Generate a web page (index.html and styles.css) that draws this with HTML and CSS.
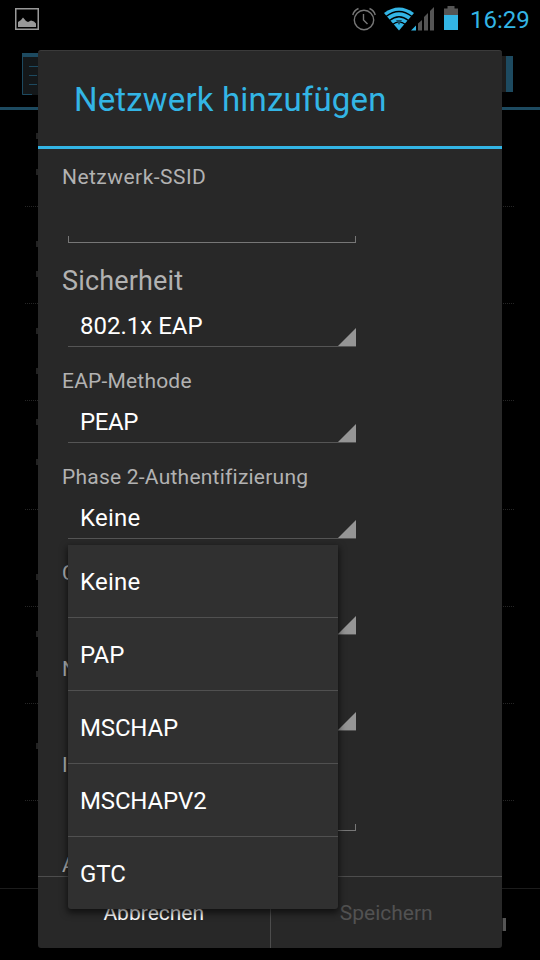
FILE: index.html
```html
<!DOCTYPE html>
<html lang="de">
<head>
<meta charset="utf-8">
<title>Netzwerk hinzufügen</title>
<link rel="stylesheet" href="styles.css">
</head>
<body>
<div class="screen">
  <header class="status">
    <svg class="picture" width="24" height="22" viewBox="0 0 24 22"><path d="M.75.75h22.5v20.5H.75z" fill="none" stroke="#999" stroke-width="1.5"/><path d="M3 19v-5l3-2 2-2.500 3 3.500 2 1 3-1.500 3 1 2 2V19z" fill="#999"/></svg>
    <div class="status-right">
      <svg class="alarm" width="24" height="24" viewBox="0 0 24 24" fill="none" stroke="#777" stroke-width="1.4"><circle cx="12" cy="13" r="9.7"/><path d="M11.500 7v6l4 4M.8 8C1.500 5 3.500 2.800 6.500 1.500M23.200 8C22.500 5 20.500 2.800 17.500 1.500"/></svg>
      <svg class="signals" width="51" height="24" viewBox="0 0 51 24"><path d="M15 23.500 0 6Q15-5 30 6z" fill="#33b5e5"/><path d="M2 9.500Q15-.5 28 9.500M5.500 13.500Q15 6 24.500 13.500M8.500 17.500Q15 12.500 21.500 17.500" fill="none" stroke="#000" stroke-width="1.300"/><path d="m12 13h6l-3 5z" fill="#174e64"/><path d="M27 23.500h5v-5z" fill="#33b5e5"/><path d="M34 23.500v-7l4-3.500v10.500zM40 23.500V10l4-4v17.500zM46 23.500V4l4-4v23.500z" fill="#555"/></svg>
      <svg class="battery" width="14" height="24" viewBox="0 0 14 24"><path d="M0 9V2.500h3.500V0h7v2.500H14V9z" fill="#555"/><path d="M0 9h14v15H0z" fill="#33b5e5"/></svg>
      <span class="clock">16:29</span>
    </div>
  </header>
  <div class="actionbar">
    <svg width="18" height="42" viewBox="0 0 18 42"><path d="M0 0h18v42H0z" fill="#14181a"/><path d="M.5 0v41.500H10M7 13.500h11M7 22.500h8M7 31.500h8" fill="none" stroke="#1d4a60"/><path d="M0 0h18v4H0z" fill="#1d4a60"/></svg>
    <span class="switch"></span>
  </div>
  <div class="settings">
    <div class="row r1"><i></i><i></i></div>
    <div class="row r2"><i></i><i></i></div>
    <div class="row r3"><i></i><i></i></div>
    <div class="row r4"><i></i><i></i></div>
    <div class="row r5"><i></i></div>
    <div class="row r3"><i></i><i></i></div>
    <div class="row r7"><i></i></div>
  </div>
  <div class="bottombar"><span class="sliver"></span></div>
</div>

<main class="dialog">
  <h1 class="title">Netzwerk hinzufügen</h1>
  <div class="form">
    <div class="field"><label class="label ssid">Netzwerk-SSID</label><div class="input"></div></div>
    <div class="field"><label class="label large">Sicherheit</label><div class="spinner"><span>802.1x EAP</span></div></div>
    <div class="field"><label class="label eap">EAP-Methode</label><div class="spinner"><span class="peap">PEAP</span></div></div>
    <div class="field"><label class="label phase">Phase 2-Authentifizierung</label><div class="spinner"><span class="keine">Keine</span></div></div>
    <div class="field"><label class="label clipped">C</label><div class="spinner"></div></div>
    <div class="field"><label class="label clipped">N</label><div class="spinner"></div></div>
    <div class="field"><label class="label clipped">I</label><div class="input"></div></div>
    <div class="field"><label class="label clipped">A</label></div>
  </div>
  <div class="buttons"><div class="button">Abbrechen</div><div class="button disabled">Speichern</div></div>
</main>

<ul class="popup">
  <li class="keine">Keine</li>
  <li>PAP</li>
  <li class="long">MSCHAP</li>
  <li class="long">MSCHAPV2</li>
  <li>GTC</li>
</ul>
</body>
</html>
```

FILE: styles.css
```css
* { box-sizing: border-box; margin: 0; padding: 0; }
body { width: 540px; height: 960px; overflow: hidden; background: #000; font-family: Roboto, sans-serif; }
svg { display: block; }
.screen { height: 960px; display: flex; flex-direction: column; }
.status { height: 38px; padding: 0 11px 0 15px; display: flex; justify-content: space-between; align-items: flex-start; flex: none; }
.picture { margin-top: 8px; }
.status-right { display: flex; align-items: flex-start; }
.alarm { margin: 7px 8px 0 0; }
.signals { margin: 7px 9px 0 0; }
.battery { margin: 6px 12px 0 0; }
.clock { font-size: 24px; line-height: 28px; color: #33b5e5; margin-top: 6px; width: 59px; white-space: nowrap; }
.actionbar { height: 72px; flex: none; padding: 15px 27px 0 22px; display: flex; justify-content: space-between; border-bottom: 3px solid #1d4a60; }
.switch { width: 20px; height: 36px; margin-top: 3px; background: linear-gradient(90deg, #1d1d1d 13px, #1d4a60 13px); }

/* Dimmed list behind the dialog: only its outer edges stay visible. */
.settings { height: 778px; flex: none; padding: 0 25px; }
.row { height: 97px; padding-left: 11px; background: repeating-linear-gradient(90deg, #262626 0 1px, #000 1px 2px) bottom / 100% 1px no-repeat; }
.row i { display: block; width: 2px; height: 6px; background: #222; }
.r1 { padding-top: 23px; }
.r1 i + i { margin-top: 30px; }
.r2 { padding-top: 34px; }
.r2 i + i { margin-top: 24px; }
.r3 { padding-top: 24px; }
.r3 i + i { margin-top: 34px; }
.r4 { height: 109px; padding-top: 18px; }
.r4 i + i { margin-top: 34px; }
.r5 { padding-top: 64px; }
.r7 { padding-top: 39px; }
.bottombar { flex: 1; border-top: 1px solid #1c1c1c; padding: 29px 34px 0; display: flex; justify-content: flex-end; }
.sliver { width: 5px; height: 13px; background: linear-gradient(90deg, #222 2px, #555 2px); }

.dialog { position: absolute; left: 38px; top: 50px; width: 464px; height: 898px; background: #282828; border-radius: 3px; border-top: 1px solid #3a3a3a; display: flex; flex-direction: column; overflow: hidden; }
.title { flex: none; height: 98px; padding: 29px 0 0 36px; border-bottom: 3px solid #33b5e5; color: #33b5e5; font-size: 33px; line-height: 40px; font-weight: 400; letter-spacing: .16px; white-space: nowrap; }
.form { flex: 1; min-height: 0; overflow: hidden; padding: 16px 24px 0; }
.field { margin-bottom: 22px; width: 300px; }
.label { display: block; font-size: 21px; line-height: 24px; color: #b2b2b2; white-space: nowrap; }
.ssid { letter-spacing: .46px; }
.eap { letter-spacing: .2px; }
.phase { letter-spacing: .23px; }
.clipped { width: 6px; overflow: hidden; }
.large { font-size: 27px; line-height: 32px; letter-spacing: .15px; }
.input { height: 54px; margin: 0 6px; display: flex; align-items: flex-end; }
.input::after { content: ""; flex: 1; height: 6px; border: 1px solid #777; border-top: 0; }
.spinner { height: 50px; margin: 0 6px; padding: 15px 0 0 12px; font-size: 24px; line-height: 28px; color: #fff; border-bottom: 1px solid #555; display: flex; justify-content: space-between; white-space: nowrap; }
.spinner::after { content: ""; width: 18px; height: 18px; margin: 1px 0 0 auto; align-self: flex-end; background: #959595; clip-path: polygon(100% 0, 100% 100%, 0 100%); }
.peap { letter-spacing: -.4px; }
.keine { letter-spacing: .25px; }
.buttons { flex: none; height: 72px; border-top: 1px solid #4d4d4d; display: flex; }
.button { flex: 1; display: flex; align-items: center; justify-content: center; font-size: 21px; line-height: 24px; color: #fff; }
.button + .button { border-left: 1px solid #4d4d4d; }
.disabled { color: #525252; }

.popup { position: absolute; left: 68px; top: 545px; width: 270px; height: 364px; list-style: none; background: #303030; border-radius: 0 0 3px 3px; box-shadow: 0 3px 7px 1px rgba(0,0,0,.6); color: #fff; font-size: 24px; line-height: 28px; }
.popup li { height: 73px; padding: 23px 12px 0; border-bottom: 1px solid #505050; }
.popup li:last-child { height: 72px; border-bottom: 0; }
.long { letter-spacing: -.15px; }
```
